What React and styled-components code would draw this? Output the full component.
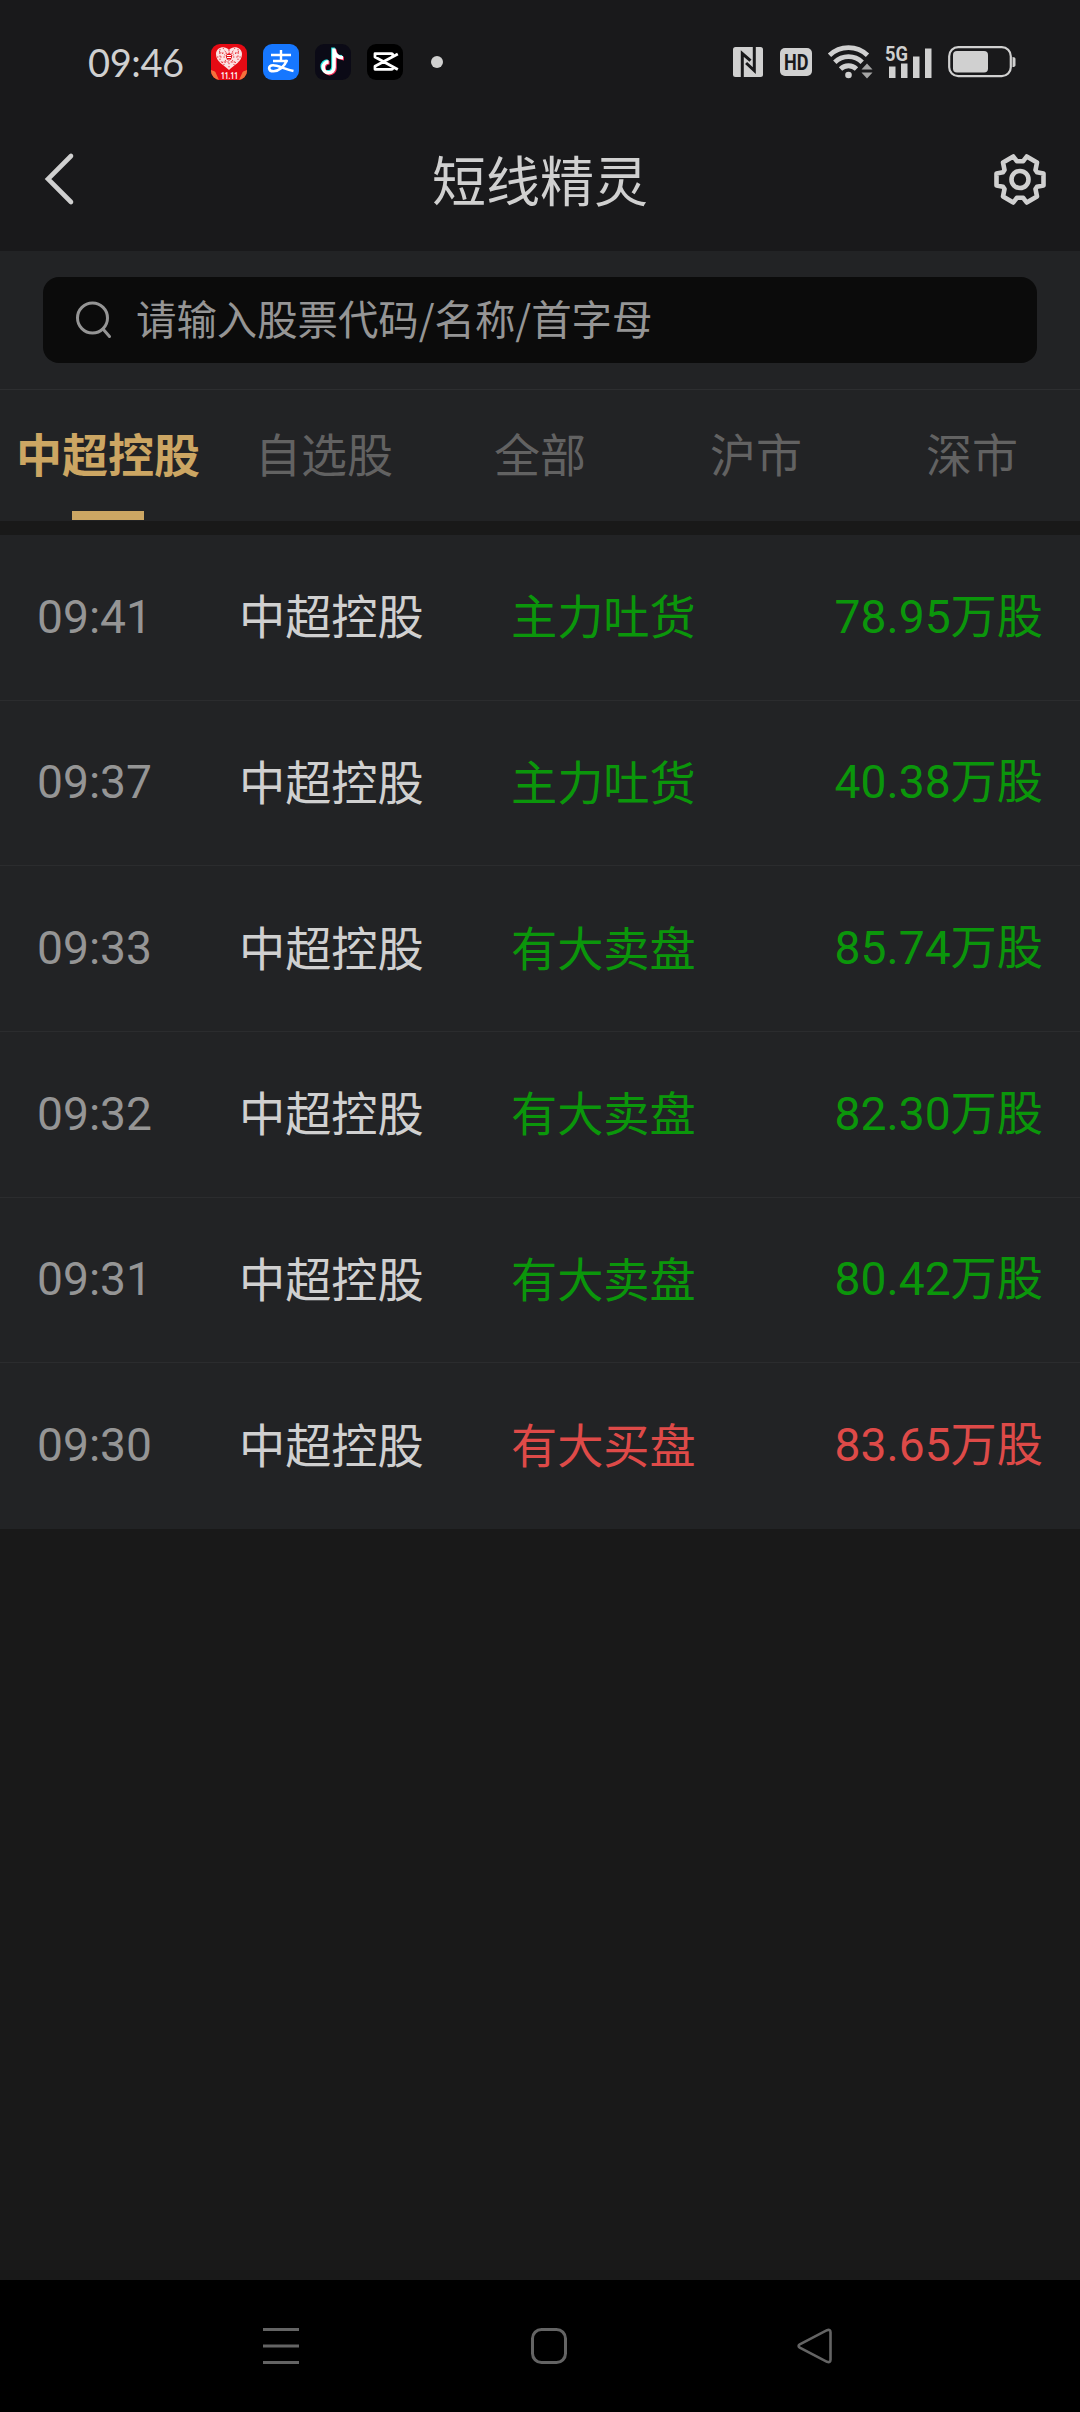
import React from "react";
import styled, { createGlobalStyle } from "styled-components";

const GlobalStyle = createGlobalStyle`
  * {
    box-sizing: border-box;
  }
  body {
    margin: 0;
    background: #191919;
    font-family: Roboto, "Noto Sans CJK SC", sans-serif;
  }
  svg {
    display: block;
    flex: none;
    overflow: visible;
  }
`;

const Screen = styled.div`
  width: 1080px;
  height: 2412px;
  display: flex;
  flex-direction: column;
  background: #191919;
`;

const StatusBar = styled.div`
  height: 125px;
  flex: none;
  display: flex;
  justify-content: space-between;
  align-items: center;
  padding: 0 64px 1px 88px;
  background: #19191b;
`;

const StatusGroup = styled.div`
  display: flex;
  align-items: center;
`;

const Clock = styled.span`
  width: 123px;
  padding-bottom: 1px;
  font-family: Lato, sans-serif;
  font-size: 38px;
  letter-spacing: -0.4px;
  line-height: 50px;
  color: #d0d0d0;
`;

const AppIcons = styled.div`
  display: flex;
  gap: 16px;
`;

const MoreDot = styled.span`
  width: 12px;
  height: 12px;
  margin-left: 28px;
  border-radius: 50%;
  background: #d0d0d0;
`;

const TitleBar = styled.header`
  height: 126px;
  flex: none;
  display: grid;
  grid-template-columns: 86px 1fr 86px;
  align-items: center;
  padding: 0 0 18px;
  background: #19191b;
`;

const Title = styled.h1`
  margin: 0;
  padding-top: 10px;
  font-size: 54px;
  font-weight: 400;
  line-height: 72px;
  text-align: center;
  color: #d0d0d0;
`;

const IconButton = styled.button`
  display: flex;
  padding: 0;
  border: 0;
  background: none;
  justify-content: ${(p) => (p.$end ? "flex-end" : "flex-start")};
  padding-left: ${(p) => (p.$end ? 0 : "44px")};
  padding-right: ${(p) => (p.$end ? "34px" : 0)};
`;

const SearchPanel = styled.div`
  height: 139px;
  flex: none;
  padding: 26px 43px 0;
  background: #222325;
  border-bottom: 1px solid #2d2e30;
`;

const SearchBox = styled.div`
  height: 86px;
  display: flex;
  align-items: center;
  gap: 24px;
  padding-left: 32px;
  border-radius: 16px;
  background: #0b0b0b;
`;

const Placeholder = styled.span`
  padding-bottom: 4px;
  font-family: "Noto Sans CJK SC", sans-serif;
  font-size: 40.4px;
  line-height: 60px;
  color: #959595;
`;

const Tabs = styled.nav`
  height: 131px;
  flex: none;
  display: grid;
  grid-template-columns: repeat(5, 1fr);
  background: #222325;
`;

const Tab = styled.div`
  position: relative;
  height: 131px;
  text-align: center;
  white-space: nowrap;
  font-size: 46px;
  line-height: 133px;
  font-weight: ${(p) => (p.$active ? 700 : 400)};
  color: ${(p) => (p.$active ? "#cca663" : "#626262")};
`;

const TabLine = styled.span`
  position: absolute;
  left: 72px;
  bottom: 1px;
  width: 72px;
  height: 9px;
  background: #cca663;
`;

const List = styled.div`
  margin-top: 14px;
  flex: 1;
`;

const Row = styled.div`
  height: 165.67px;
  display: grid;
  grid-template-columns: 202px 272px 1fr auto;
  align-items: center;
  padding: 0 37px;
  font-size: 46.2px;
  line-height: 66px;
  background: #222325;
  border-bottom: 1px solid #2b2c2e;

  &:last-child {
    border-bottom-color: #222325;
  }
`;

const Time = styled.span`
  padding-bottom: 1px;
  color: #959595;
`;

const Name = styled.span`
  padding-top: 2px;
  color: #d0d0d0;
`;

const Signal = styled.span`
  padding-top: 2px;
  color: ${(p) => (p.$up ? "#de4a48" : "#0b960b")};
`;

const Amount = styled(Signal)`
  padding: 0 0 1px;
`;

const NavBar = styled.footer`
  height: 132px;
  flex: none;
  display: flex;
  justify-content: space-between;
  align-items: center;
  padding: 0 246px 0 263px;
  background: #000;
`;

const NavIcon = ({ children }) => (
  <svg width="36" height="36" viewBox="0 0 36 36" fill="none" stroke="#646464" strokeWidth="3">
    {children}
  </svg>
);

const MallIcon = () => (
  <svg width="36" height="36" viewBox="0 0 36 36">
    <rect width="36" height="36" rx="9" fill="#e60a14" />
    <path d="M0 26q18 8 36 0v1a9 9 0 0 1-9 9H9a9 9 0 0 1-9-9z" fill="#f4713c" />
    <path d="M3 25q15 5 30 0l-5 11H8z" fill="#e60a14" />
    <path d="M18 6C14 1 5 3 5 10c0 8 8 11 13 16 5-5 13-8 13-16 0-7-9-9-13-4z" fill="#fbe3e3" />
    <path
      d="M8 7l20 14M28 7L8 21M12 4l12 18M24 4L12 22M6 13h24M18 6v19M9 5v13M27 5v13M8 9h20M10 18h16"
      stroke="#e60a14"
      strokeWidth=".8"
      strokeDasharray="1.4 1.8"
    />
    <circle cx="18" cy="12.500" r="3" fill="#e60a14" />
    <path d="M16 11.500h4M16 13.500h4" stroke="#fff" strokeWidth="1" />
    <text x="10" y="34.5" fontFamily="Roboto" fontSize="9.500" fontWeight="700" textLength="17" lengthAdjust="spacingAndGlyphs" fill="#fff">
      11.11
    </text>
  </svg>
);

const PayIcon = () => (
  <svg width="36" height="36" viewBox="0 0 36 36" fill="none" stroke="#fff">
    <rect width="36" height="36" rx="9" fill="#1677ff" stroke="none" />
    <path d="M8 11h20M18 6v10M10 17h14.500" strokeWidth="2.400" />
    <path d="M24 16C21.500 22.500 16 27 10.500 27.300c-5.500 0-6-6-.5-6 5 0 11 3.700 20.500 5.700" strokeWidth="2.600" />
  </svg>
);

const NOTE = "M19 4.500v18.800a5.400 5.400 0 1 1-5.400-5.400M19 6c.5 4.500 3.500 7.500 9 7.700";

const MusicIcon = () => (
  <svg width="36" height="36" viewBox="0 0 36 36" fill="none" strokeWidth="3.600">
    <rect width="36" height="36" rx="9" fill="#0b0a16" />
    <path d={NOTE} stroke="#25e8e4" transform="translate(-1 -.9)" />
    <path d={NOTE} stroke="#f5305a" transform="translate(1 .9)" />
    <path d={NOTE} stroke="#fff" />
  </svg>
);

const CutIcon = () => (
  <svg width="36" height="36" viewBox="0 0 36 36" fill="none" stroke="#fff" strokeWidth="2.800">
    <rect width="36" height="36" rx="9" fill="#000" stroke="none" />
    <path d="M30.800 10L8 22.300v3h16.500q1.200 0 1.200-1.200v-2M30.800 25.500L8 13V9.700h16.500q1.200 0 1.200 1.200v2" strokeLinejoin="round" />
  </svg>
);

const NfcIcon = () => (
  <svg width="30" height="30" viewBox="0 0 30 30">
    <rect width="30" height="30" rx="2.500" fill="#d0d0d0" />
    <path d="M9.300 30V6.500l8.200 7.200M21.300 0v23.500l-8.200-7.500" fill="none" stroke="#19191b" strokeWidth="3" />
  </svg>
);

const HdIcon = () => (
  <svg width="32" height="28" viewBox="0 0 32 28">
    <rect width="32" height="28" rx="5" fill="#d0d0d0" />
    <text x="4" y="21.800" fontFamily="Roboto" fontSize="22" fontWeight="700" textLength="24.500" lengthAdjust="spacingAndGlyphs" fill="#19191b">
      HD
    </text>
  </svg>
);

const WifiIcon = () => (
  <svg width="46" height="36" viewBox="0 0 46 36" fill="none" stroke="#d0d0d0" strokeWidth="4.800">
    <path d="M1.500 11.300a27.500 27.500 0 0 1 38 0M6.800 18.200a19.500 19.500 0 0 1 27.400 0M12.500 25a11.500 11.500 0 0 1 16 0" />
    <circle cx="20.500" cy="31" r="3.300" fill="#d0d0d0" stroke="none" />
    <path d="M33.500 25.500l5.500-6 5.500 6zM33.500 28.500h11l-5.500 6z" fill="#a5a5a5" stroke="none" />
  </svg>
);

const SignalIcon = () => (
  <svg width="48" height="34" viewBox="0 0 48 34" fill="#d0d0d0">
    <text x="0" y="16" fontFamily="Roboto" fontSize="21" fontWeight="700" textLength="23" lengthAdjust="spacingAndGlyphs">
      5G
    </text>
    <path d="M4 21.500h6.500V33H4zM16 18.500h6.500V33H16zM28 11.500h6.500V33H28zM40 3.500h6.500V33H40z" />
  </svg>
);

const BatteryIcon = () => (
  <svg width="68" height="32" viewBox="0 0 68 32">
    <rect x="1.200" y="1.200" width="61.600" height="29" rx="9" fill="none" stroke="#d0d0d0" strokeWidth="2.200" />
    <rect x="5" y="5" width="35" height="21.500" rx="4" fill="#d0d0d0" />
    <path d="M64.500 11q3 0 3 2v6q0 2-3 2z" fill="#d0d0d0" />
  </svg>
);

const SystemIcons = styled.div`
  display: flex;
  align-items: center;
  & > svg:nth-child(1) {
    margin-right: 17px;
  }
  & > svg:nth-child(2) {
    margin-right: 16px;
  }
  & > svg:nth-child(3) {
    margin-right: 11px;
  }
  & > svg:nth-child(4) {
    margin-right: 15px;
  }
`;

const BackIcon = () => (
  <svg width="32" height="52" viewBox="0 0 32 52" fill="none" stroke="#d0d0d0" strokeWidth="4.600">
    <path d="M27 3L4 26l23 23" strokeLinecap="round" />
  </svg>
);

const GearIcon = () => (
  <svg width="52" height="51" viewBox="0 0 52 51" fill="none" stroke="#d0d0d0" strokeWidth="4.600" strokeLinejoin="round">
    <path d="M19.300 2.500L22.800 7.200h6.400l3.500-4.700L43 8.500l-1.500 7.500 1.500 2.200 6.500 1.300v12L43 32.800 41.500 35l1.500 7.500-10.300 6-3.500-4.700h-6.400l-3.500 4.700L9 42.500 10.500 35 9 32.800l-6.500-1.300v-12L9 18.200l1.500-2.200L9 8.500z" />
    <circle cx="26" cy="25.500" r="8.500" />
  </svg>
);

const SearchIcon = () => (
  <svg width="37" height="38" viewBox="0 0 37 38" fill="none" stroke="#959595" strokeWidth="3" strokeLinecap="round">
    <circle cx="17.500" cy="17" r="15" />
    <path d="M28 28l6.500 7.500" />
  </svg>
);

const tabs = ["中超控股", "自选股", "全部", "沪市", "深市"];

const rows = [
  { time: "09:41", signal: "主力吐货", amount: "78.95万股" },
  { time: "09:37", signal: "主力吐货", amount: "40.38万股" },
  { time: "09:33", signal: "有大卖盘", amount: "85.74万股" },
  { time: "09:32", signal: "有大卖盘", amount: "82.30万股" },
  { time: "09:31", signal: "有大卖盘", amount: "80.42万股" },
  { time: "09:30", signal: "有大买盘", amount: "83.65万股", up: true },
];

const App = () => {
  const [active, setActive] = React.useState(0);

  return (
    <Screen>
      <GlobalStyle />
      <StatusBar>
        <StatusGroup>
          <Clock>09:46</Clock>
          <AppIcons>
            <MallIcon />
            <PayIcon />
            <MusicIcon />
            <CutIcon />
          </AppIcons>
          <MoreDot />
        </StatusGroup>
        <SystemIcons>
          <NfcIcon />
          <HdIcon />
          <WifiIcon />
          <SignalIcon />
          <BatteryIcon />
        </SystemIcons>
      </StatusBar>
      <TitleBar>
        <IconButton>
          <BackIcon />
        </IconButton>
        <Title>短线精灵</Title>
        <IconButton $end>
          <GearIcon />
        </IconButton>
      </TitleBar>
      <SearchPanel>
        <SearchBox>
          <SearchIcon />
          <Placeholder>请输入股票代码/名称/首字母</Placeholder>
        </SearchBox>
      </SearchPanel>
      <Tabs>
        {tabs.map((tab, i) => (
          <Tab key={tab} $active={i === active} onClick={() => setActive(i)}>
            {tab}
            {i === active && <TabLine />}
          </Tab>
        ))}
      </Tabs>
      <List>
        {rows.map((row) => (
          <Row key={row.time}>
            <Time>{row.time}</Time>
            <Name>中超控股</Name>
            <Signal $up={row.up}>{row.signal}</Signal>
            <Amount $up={row.up}>{row.amount}</Amount>
          </Row>
        ))}
      </List>
      <NavBar>
        <NavIcon>
          <path d="M0 1.500h36M0 18h36M0 34.500h36" />
        </NavIcon>
        <NavIcon>
          <rect x="1.500" y="1.500" width="33" height="33" rx="9" />
        </NavIcon>
        <NavIcon>
          <path d="M1.800 16.300L29 2.200q3.500-1.200 3.500 2v27.600q0 3.200-3.500 2L1.800 19.700q-2.400-1.700 0-3.400z" strokeWidth="2.600" />
        </NavIcon>
      </NavBar>
    </Screen>
  );
};

export default App;
